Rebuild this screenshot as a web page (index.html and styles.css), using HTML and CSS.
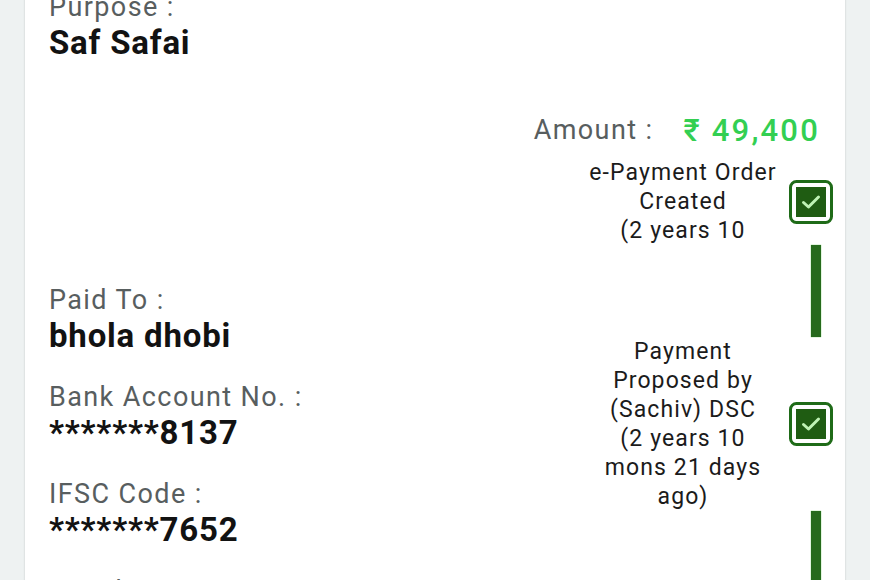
FILE: index.html
```html
<!DOCTYPE html>
<html lang="en">
<head>
  <meta charset="UTF-8">
  <meta name="viewport" content="width=device-width, initial-scale=1.0">
  <title>Payment Details</title>
  <link rel="stylesheet" href="styles.css">
</head>
<body>
  <div class="card">
    <div class="field purpose">
      <div class="label">Purpose :</div>
      <div class="value">Saf Safai</div>
    </div>

    <div class="amount-row">
      <span class="label">Amount :</span>
      <span class="amount">₹ 49,400</span>
    </div>

    <div class="details">
      <div class="fields">
        <div class="field">
          <div class="label">Paid To :</div>
          <div class="value">bhola dhobi</div>
        </div>
        <div class="field">
          <div class="label">Bank Account No. :</div>
          <div class="value">*******8137</div>
        </div>
        <div class="field">
          <div class="label">IFSC Code :</div>
          <div class="value">*******7652</div>
        </div>
        <div class="field">
          <div class="label">Voucher No./Date :</div>
          <div class="value">--</div>
        </div>
      </div>

      <div class="timeline">
        <div class="step-text clipped">e-Payment Order<br>Created<br>(2 years 10<br>mons 21 days<br>ago)</div>
        <div class="step-check">
          <svg width="44" height="44" viewBox="0 0 44 44">
            <rect x="1.5" y="1.5" width="41" height="41" rx="6" fill="#fff" stroke="#1f6b18" stroke-width="3"/>
            <rect x="7" y="7" width="30" height="30" fill="#1f5c12"/>
            <path d="M14.5 22.5 L19.5 27 L29.5 17" fill="none" stroke="#bff3b4" stroke-width="3" stroke-linecap="round" stroke-linejoin="round"/>
          </svg>
        </div>
        <div class="connector"></div>

        <div class="step-text">Payment<br>Proposed by<br>(Sachiv) DSC<br>(2 years 10<br>mons 21 days<br>ago)</div>
        <div class="step-check">
          <svg width="44" height="44" viewBox="0 0 44 44">
            <rect x="1.5" y="1.5" width="41" height="41" rx="6" fill="#fff" stroke="#1f6b18" stroke-width="3"/>
            <rect x="7" y="7" width="30" height="30" fill="#1f5c12"/>
            <path d="M14.5 22.5 L19.5 27 L29.5 17" fill="none" stroke="#bff3b4" stroke-width="3" stroke-linecap="round" stroke-linejoin="round"/>
          </svg>
        </div>
        <div class="connector"></div>
      </div>
    </div>
  </div>
</body>
</html>
```

FILE: styles.css
```css
/* Reset styles */
* {
  margin: 0;
  padding: 0;
  box-sizing: border-box;
}

body {
  font-family: Roboto, "Liberation Sans", sans-serif;
  background-color: #eef2f2;
  height: 100vh;
  overflow: hidden;
}

/* White card, scrolled so its top sits above the window */
.card {
  background-color: #fff;
  margin: -11px 25px 0 25px;
  padding: 0 12px 0 24px;
  min-height: 110vh;
  box-shadow: 0 0 2px rgba(0, 0, 0, 0.18);
}

/* Label / value pairs */
.field {
  margin-bottom: 25px;
}

.label {
  font-size: 27px;
  line-height: 36px;
  letter-spacing: 1.4px;
  color: #585e5f;
}

.value {
  font-size: 33px;
  line-height: 36px;
  font-weight: 700;
  letter-spacing: 0.8px;
  color: #121212;
}

.purpose {
  margin-bottom: 0;
}

/* Amount */
.amount-row {
  display: flex;
  justify-content: flex-end;
  align-items: center;
  gap: 30px;
  height: 40px;
  margin-top: 49px;
  padding-right: 13px;
}

.amount {
  font-size: 31px;
  font-weight: 500;
  letter-spacing: 2.2px;
  color: #33cf52;
}

/* Left fields and right timeline */
.details {
  display: grid;
  grid-template-columns: 1fr auto;
}

.fields {
  padding-top: 132px;
}

.timeline {
  display: grid;
  grid-template-columns: 200px 44px;
  column-gap: 6px;
  align-items: center;
  align-self: start;
  align-content: start;
  margin-top: 8px;
}

.step-text {
  grid-column: 1;
  text-align: center;
  font-size: 23px;
  line-height: 29px;
  letter-spacing: 1.1px;
  color: #1b1b1b;
}

.step-text.clipped {
  max-height: 87px;
  overflow: hidden;
}

.step-check {
  grid-column: 2;
  height: 44px;
}

.step-check svg {
  display: block;
}

.connector {
  grid-column: 2;
  width: 10px;
  height: 92px;
  margin-left: 22px;
  background-color: #266a1c;
  box-shadow: 0 0 1px #4fc13c;
}
```
